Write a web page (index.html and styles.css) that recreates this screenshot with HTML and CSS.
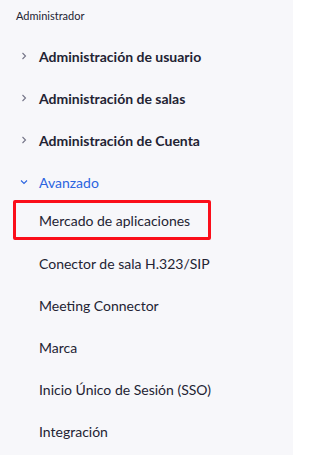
FILE: index.html
```html
<!DOCTYPE html>
<html lang="es">

<head>
    <meta charset="utf-8">
    <meta name="viewport" content="width=device-width, initial-scale=1.0">
    <title>Administrador</title>

    <link rel="stylesheet" href="styles.css">
</head>

<body>
    <aside class="menu">
        <p class="titulo">Administrador</p>

        <ul class="grupos">
            <li class="grupo">
                <svg class="pil" viewBox="0 0 10 10"><path d="M3.5 2 L6.5 5 L3.5 8" /></svg>
                <span>Administración de usuario</span>
            </li>
            <li class="grupo">
                <svg class="pil" viewBox="0 0 10 10"><path d="M3.5 2 L6.5 5 L3.5 8" /></svg>
                <span>Administración de salas</span>
            </li>
            <li class="grupo">
                <svg class="pil" viewBox="0 0 10 10"><path d="M3.5 2 L6.5 5 L3.5 8" /></svg>
                <span>Administración de Cuenta</span>
            </li>
            <li class="grupo aaben">
                <svg class="pil" viewBox="0 0 10 10"><path d="M2 3.5 L5 6.5 L8 3.5" /></svg>
                <span>Avanzado</span>
            </li>
        </ul>

        <ul class="under">
            <li><span class="markeret">Mercado de aplicaciones</span></li>
            <li><span>Conector de sala H.323/SIP</span></li>
            <li><span>Meeting Connector</span></li>
            <li><span>Marca</span></li>
            <li><span>Inicio Único de Sesión (SSO)</span></li>
            <li><span>Integración</span></li>
        </ul>
    </aside>
</body>

</html>
```

FILE: styles.css
```css
body {
    margin: 0;
    background-color: white;
    font-family: Lato, "Noto Sans", sans-serif;
    color: #232333;
}

.menu {
    width: 293px;
    min-height: 100vh;
    background-color: #f7f7fa;
}

.titulo {
    margin: 0;
    padding: 9px 0 0 16px;
    height: 26px;
    font-size: 11px;
    line-height: 14px;
}

ul {
    list-style: none;
    margin: 0;
    padding: 0;
}

.grupo {
    display: flex;
    align-items: center;
    height: 42px;
    font-size: 14px;
    font-weight: bold;
}

.pil {
    width: 10px;
    height: 10px;
    margin: 0 10px 0 19px;
    fill: none;
    stroke: #747487;
    stroke-width: 1.1;
}

.aaben {
    color: #2b64e0;
    font-weight: normal;
}

.aaben .pil {
    stroke: #2b64e0;
}

.under {
    margin-top: -5px;
}

.under li {
    height: 42px;
    font-size: 14px;
}

.under span {
    display: flex;
    align-items: center;
    height: 42px;
    padding-left: 39px;
}

.under .markeret {
    box-sizing: border-box;
    width: 198px;
    height: 40px;
    margin: 2px 0 0 13px;
    padding-left: 23px;
    border: 3px solid #fb0e1a;
    border-radius: 2px;
}
```
